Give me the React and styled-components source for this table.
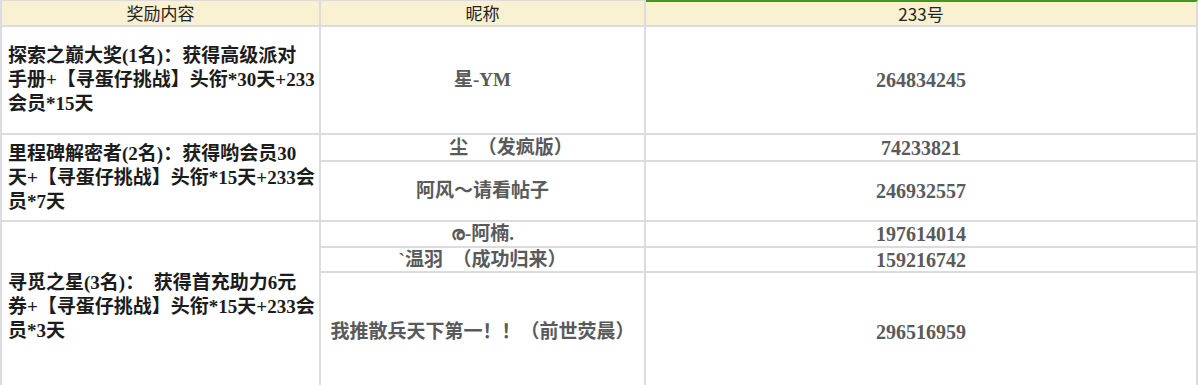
import React from "react";
import styled, { createGlobalStyle } from "styled-components";

const GlobalStyle = createGlobalStyle`
  html, body {
    margin: 0;
    padding: 0;
    background: #ffffff;
  }
`;

const Table = styled.table`
  width: 1198px;
  table-layout: fixed;
  border-collapse: separate;
  border-spacing: 0;
  border-left: 2px solid #dcdce0;
  box-sizing: border-box;
`;

const HeadCell = styled.th`
  box-sizing: border-box;
  height: 27px;
  padding: 0;
  background: #faf1d2;
  border-top: ${props => (props.$accent ? "2px solid #3c9a1e" : "1px solid #dcdce0")};
  border-right: 2px solid #dcdce0;
  border-bottom: 2px solid #dcdce0;
  font-family: "Noto Sans CJK SC", "Noto Sans", sans-serif;
  font-weight: 400;
  font-size: 17px;
  line-height: 22px;
  color: #222222;
  text-align: center;
  vertical-align: middle;
`;

const Row = styled.tr`
  height: ${props => props.$h}px;
`;

const RewardCell = styled.td`
  box-sizing: border-box;
  padding: 0 0 0 6px;
  border-right: 2px solid #dcdce0;
  border-bottom: 2px solid #dcdce0;
  font-family: "Liberation Serif", "Noto Sans CJK SC", serif;
  font-weight: 700;
  font-size: 19px;
  line-height: 24px;
  color: #1c1c1c;
  vertical-align: middle;
  white-space: pre;
  overflow: hidden;
`;

const Line = styled.span`
  display: block;
`;

const ValueCell = styled.td`
  box-sizing: border-box;
  padding: 0;
  border-right: 2px solid #dcdce0;
  border-bottom: 2px solid #dcdce0;
  font-family: "Liberation Serif", "Noto Sans CJK SC", serif;
  font-weight: 700;
  font-size: ${props => (props.$num ? 20 : 19)}px;
  line-height: 20px;
  color: #5a5a5a;
  text-align: center;
  vertical-align: middle;
  white-space: pre;
`;

const groups = [
  {
    reward: [
      "探索之巅大奖(1名)：获得高级派对",
      "手册+【寻蛋仔挑战】头衔*30天+233",
      "会员*15天",
    ],
    members: [{ name: "星-YM", id: "264834245", h: 108 }],
  },
  {
    reward: [
      "里程碑解密者(2名)：获得哟会员30",
      "天+【寻蛋仔挑战】头衔*15天+233会",
      "员*7天",
    ],
    members: [
      { name: "\u3000\u3000\u3000尘\u3000（发疯版）", id: "74233821", h: 27 },
      { name: "阿风～请看帖子", id: "246932557", h: 60 },
    ],
  },
  {
    reward: [
      "寻觅之星(3名)：\u2002获得首充助力6元",
      "券+【寻蛋仔挑战】头衔*15天+233会",
      "员*3天",
    ],
    members: [
      { name: "ര-阿楠.", id: "197614014", h: 26 },
      { name: "`温羽\u3000（成功归来）", id: "159216742", h: 25 },
      { name: "我推散兵天下第一！！（前世荧晨）", id: "296516959", h: 120 },
    ],
  },
];

export default function App() {
  return (
    <>
      <GlobalStyle />
      <Table>
        <colgroup>
          <col style={{ width: 319 }} />
          <col style={{ width: 325 }} />
          <col style={{ width: 552 }} />
        </colgroup>
        <thead>
          <tr>
            <HeadCell>奖励内容</HeadCell>
            <HeadCell>昵称</HeadCell>
            <HeadCell $accent>233号</HeadCell>
          </tr>
        </thead>
        <tbody>
          {groups.map((g, gi) =>
            g.members.map((m, mi) => (
              <Row key={`${gi}-${mi}`} $h={m.h}>
                {mi === 0 && (
                  <RewardCell rowSpan={g.members.length}>
                    {g.reward.map(line => (
                      <Line key={line}>{line}</Line>
                    ))}
                  </RewardCell>
                )}
                <ValueCell>{m.name}</ValueCell>
                <ValueCell $num>{m.id}</ValueCell>
              </Row>
            ))
          )}
        </tbody>
      </Table>
    </>
  );
}
